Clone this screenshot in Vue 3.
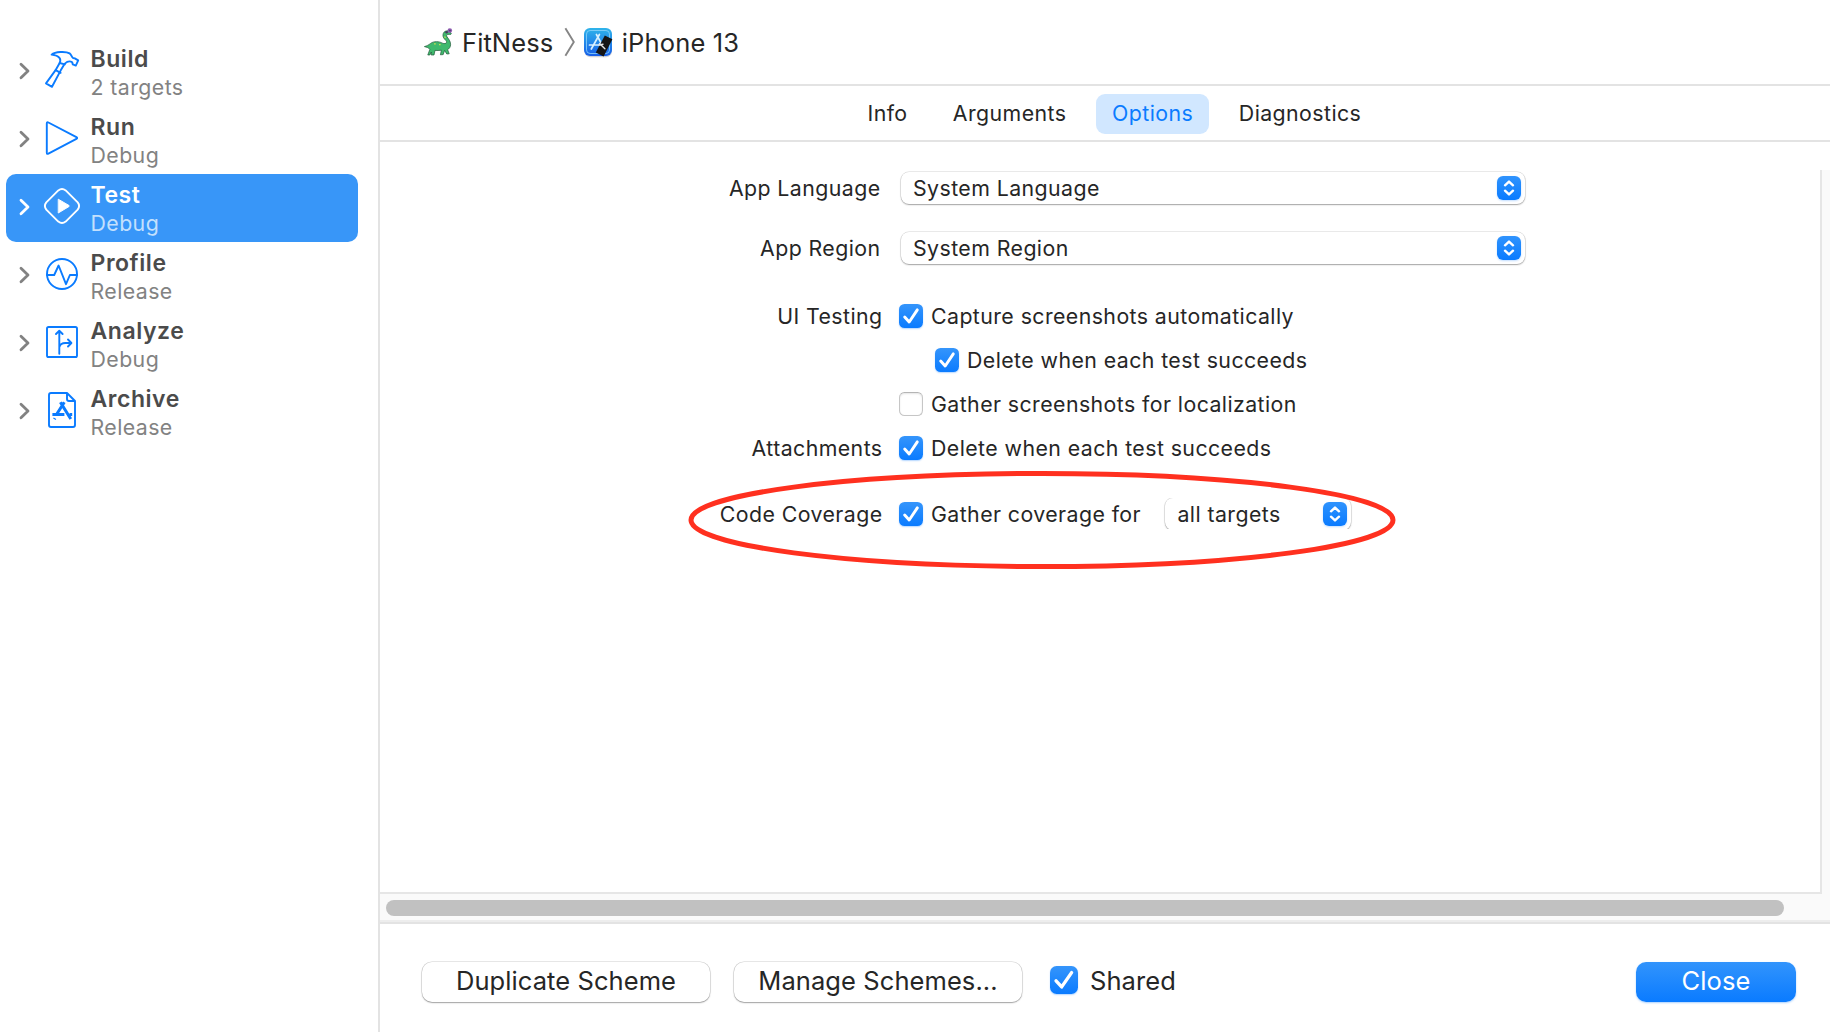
<script setup>
import { ref } from 'vue'

const schemes = [
  { name: 'Build', detail: '2 targets' },
  { name: 'Run', detail: 'Debug' },
  { name: 'Test', detail: 'Debug' },
  { name: 'Profile', detail: 'Release' },
  { name: 'Analyze', detail: 'Debug' },
  { name: 'Archive', detail: 'Release' }
]
const tabs = ['Info', 'Arguments', 'Options', 'Diagnostics']
const selects = [
  { label: 'App Language', value: 'System Language' },
  { label: 'App Region', value: 'System Region' }
]
const checks = ref([
  { label: 'UI Testing', text: 'Capture screenshots automatically', on: true },
  { label: '', text: 'Delete when each test succeeds', on: true, nested: true },
  { label: '', text: 'Gather screenshots for localization', on: false },
  { label: 'Attachments', text: 'Delete when each test succeeds', on: true },
  { label: 'Code Coverage', text: 'Gather coverage for', on: true, target: 'all targets' }
])
const activeScheme = ref('Test')
const activeTab = ref('Options')
const shared = ref(true)
</script>

<template>
  <div class="window">
    <aside class="sidebar">
      <div
        v-for="s in schemes"
        :key="s.name"
        class="scheme"
        :class="{ active: s.name === activeScheme }"
        @click="activeScheme = s.name"
      >
        <svg class="disclosure" width="12" height="18" viewBox="0 0 12 18"><path d="M2 2.2 9 9 2 15.8" /></svg>
        <svg class="glyph" width="40" height="40" viewBox="0 0 40 40">
          <template v-if="s.name === 'Build'">
            <path d="M9.6 4.6C13 1.6 24 1.2 27.6 3.4c2 1.3 1.8 3.8 3.4 4.6l1.8.4 3.4 2-2.4 5.2-3-1.2-.6-2.2c-2.6-1.6-5.2-.6-7.4 1.4L18.6 20.6 10 36.8 4 33.4 13.4 20.4l4.4-7.6c1.4-3.4.4-7-8.2-8.2Z" />
            <path d="M13.6 20.2l5 2.6M17.6 13l5.2 1.4" />
          </template>
          <path v-else-if="s.name === 'Run'" d="M6.4 4.5 34.4 19.2Q36 20 34.4 20.8L6.4 35.7Q4.8 36.4 4.8 34.8V5.4Q4.8 3.8 6.4 4.5Z" />
          <template v-else-if="s.name === 'Test'">
            <path d="M16.3 4.4q3.7-2.8 7.4 0l12 12q2.8 3.6 0 7.2l-12 12q-3.7 2.8-7.4 0l-12-12q-2.8-3.6 0-7.2Z" />
            <path class="solid" d="M16.6 13.4 27 19.5q.9.5 0 1L16.6 26.8Z" />
          </template>
          <template v-else-if="s.name === 'Profile'">
            <circle cx="20" cy="20" r="15" />
            <path d="M5 21h7.2l4.4-9.5L24 30.2 27.9 21H35" />
          </template>
          <template v-else-if="s.name === 'Analyze'">
            <rect x="5" y="5" width="30" height="30" rx="1.6" />
            <path d="M17.3 31.7V9M14 12l3.3-3.2 3.3 3.2M17.4 25c.8-3 3.2-4 6-4h5.4M26 17.5l3.4 3.5-3.4 3.5" />
          </template>
          <template v-else>
            <path d="M25 3H9Q7 3 7 5v30q0 2 2 2h22q2 0 2-2V11L25 3v6q0 2 2 2h6" />
            <path class="bold" d="M22.3 12.2 14.8 24M18.4 12.2 28.8 29M10.4 24.4h12M27.6 24.4h2.6M13 28.2l-.6 1" />
          </template>
        </svg>
        <div class="names">
          <strong>{{ s.name }}</strong>
          <span>{{ s.detail }}</span>
        </div>
      </div>
    </aside>

    <main class="main">
      <header class="path">
        <svg class="dino" width="29" height="28" viewBox="0 0 29 28">
          <path d="M.4 18.6C3 17.8 4.6 17 6.6 15.4c3-2.4 8.6-2.2 12-.2 2.6 1.2 5-.4 3.6-2.4C19.4 10.2 18.200 8 19.4 5.2 20.4 3 22.8 2.4 25.2 3.2l2 2c.4 1-.6 1.4-1.8 1.2-2.6-.2-3.4.6-2.4 2.4 1.4 2 3.8 4.4 3.6 8-.2 2.4-1.4 4-3 4.8l1.6 4.2-2.4.2-2.2-3.6-1.4 4.2-2.8.2 1-4.6c-2.2.4-4.6.4-6.4.2l-1 4.6H7.2l.2-3-1.6 3H3.8l2-5.6C4.4 19.2 2.6 19.4.4 18.6Z" fill="#3fb96d" stroke="#21593a" stroke-width=".7" />
          <path d="M10 15.8h1.8M15 16.6h1.6M20.6 8.4l.8 1.6" stroke="#c6dc54" stroke-width="1.2" />
          <circle cx="25.8" cy="2.6" r="2.3" fill="#8d5bb0" /><circle cx="22.6" cy="4.2" r="1.2" fill="#4a3560" /><circle cx="26" cy="2.6" r=".8" fill="#4a3560" />
        </svg>
        <span class="project">FitNess</span>
        <svg class="crumb" width="12" height="30" viewBox="0 0 12 30"><path d="M1.4 1.2 9.8 15 1.4 28.8" /></svg>
        <svg class="simulator" width="30" height="30" viewBox="0 0 30 30">
          <defs><linearGradient id="sim" x1="0" y1="0" x2="0" y2="1"><stop offset="0" stop-color="#2fb4ea" /><stop offset="1" stop-color="#175fe8" /></linearGradient></defs>
          <rect x=".4" y="1.2" width="27.6" height="28" rx="6" fill="#9a9ea6" opacity=".45" />
          <rect width="28" height="28" rx="6" fill="url(#sim)" />
          <rect x="2.5" y="2.5" width="23" height="23" rx="3.6" fill="none" stroke="#8ed4fa" stroke-width=".8" />
          <path d="M12.4 6.5 20.5 21M15.4 6.5 7.3 21M5.5 17h14" fill="none" stroke="#d7f0ff" stroke-width="1.700" stroke-linecap="round" />
          <path d="M20.8 7.6 28.4 11.3 19.6 28.6 11.8 24.6Z" fill="#151515" />
          <path d="m15.500 15.600 5.400 5.200M15 17l4-.8" stroke="#e5e5e5" stroke-width="1.400" stroke-linecap="round" />
        </svg>
        <span class="device">iPhone 13</span>
      </header>

      <nav class="tabs">
        <button v-for="t in tabs" :key="t" class="tab" :class="{ active: t === activeTab }" @click="activeTab = t">{{ t }}</button>
      </nav>

      <section class="pane">
        <div class="form">
          <div v-for="s in selects" :key="s.label" class="row select-row">
            <label class="label">{{ s.label }}</label>
            <div class="select">
              <span>{{ s.value }}</span>
              <span class="stepper"><svg width="24" height="24" viewBox="0 0 24 24"><path d="M8 9.3 12 5.6l4 3.7M8 14.7l4 3.7 4-3.7" /></svg></span>
            </div>
          </div>
          <div v-for="(c, i) in checks" :key="i" class="row check-row" :class="{ nested: c.nested, coverage: c.target, first: i === 0 }">
            <label class="label">{{ c.label }}</label>
            <span class="checkbox" :class="{ on: c.on }" @click="c.on = !c.on">
              <svg v-if="c.on" viewBox="0 0 24 24"><path d="M5.7 13 10.2 18 18.3 5.9" /></svg>
            </span>
            <span class="text">{{ c.text }}</span>
            <div v-if="c.target" class="select small">
              <span>{{ c.target }}</span>
              <span class="stepper"><svg width="24" height="24" viewBox="0 0 24 24"><path d="M8 9.3 12 5.6l4 3.7M8 14.7l4 3.7 4-3.7" /></svg></span>
            </div>
            <svg v-if="c.target" class="ring" width="708" height="100" viewBox="0 0 708 100"><ellipse cx="354" cy="50" rx="351" ry="46.5" /></svg>
          </div>
        </div>
        <div class="v-track"></div>
      </section>
      <div class="h-track"><div class="thumb"></div></div>

      <footer class="footer">
        <button class="button">Duplicate Scheme</button>
        <button class="button">Manage Schemes...</button>
        <span class="checkbox large" :class="{ on: shared }" @click="shared = !shared">
          <svg v-if="shared" viewBox="0 0 24 24"><path d="M5.2 12.7 10 17.9 18.5 5.7" /></svg>
        </span>
        <span class="shared">Shared</span>
        <button class="button primary">Close</button>
      </footer>
    </main>
  </div>
</template>

<style>
body { background: #fff; }
</style>

<style scoped>
.window {
  display: flex;
  width: 1830px;
  height: 1032px;
  overflow: hidden;
  background: #fff;
  color: #262626;
  font-family: Inter, "Liberation Sans", sans-serif;
  font-size: 21.3px;
  letter-spacing: 0.43px;
  white-space: nowrap;
}
button { font: inherit; letter-spacing: inherit; color: inherit; border: 0; background: none; padding: 0; }
svg { display: block; flex: none; fill: none; }

.sidebar {
  box-sizing: border-box;
  flex: none;
  width: 380px;
  padding: 38px 20px 0 6px;
  border-right: 2px solid #e3e3e3;
}
.scheme {
  display: flex;
  height: 68px;
  border-radius: 10px;
}
.disclosure { margin: 24px 0 0 12.5px; stroke: #828282; stroke-width: 2.8; stroke-linecap: round; stroke-linejoin: round; }
.glyph { margin: 12px 0 0 11.5px; stroke: #0a7bff; stroke-width: 1.9; stroke-linejoin: round; stroke-linecap: round; }
.glyph .solid { fill: #fff; stroke: #fff; stroke-width: 1; }
.glyph .bold { stroke-width: 3; stroke-linecap: butt; }
.names { padding: 7px 0 0 8.5px; line-height: 28px; }
.names strong, .names span { display: block; }
.names strong { font-size: 23px; font-weight: 600; letter-spacing: 0.55px; color: #4b4b4b; }
.names span { color: #828282; letter-spacing: 0.43px; }
.scheme.active { background: #3896f8; }
.active .disclosure, .active .glyph { stroke: #fff; }
.active .names strong { color: #fff; }
.active .names span { color: #c3e0fd; }

.main { flex: none; width: 1450px; display: flex; flex-direction: column; }
.path {
  display: flex;
  align-items: center;
  height: 84px;
  padding-left: 44px;
  border-bottom: 2px solid #e3e3e3;
  font-size: 25.5px;
  letter-spacing: 0.1px;
}
.project { margin-left: 9px; }
.crumb { margin-left: 10.5px; stroke: #858585; stroke-width: 1.9; }
.simulator { margin: 2px 0 0 8px; }
.device { margin-left: 8px; letter-spacing: 0.15px; }

.tabs {
  display: flex;
  align-items: center;
  gap: 14.3px;
  height: 52px;
  padding: 2px 0 0 472px;
  border-bottom: 2px solid #e3e3e3;
}
.tab { height: 40px; padding: 0 15.5px 2px; border-radius: 9px; line-height: 38px; }
.tab.active { padding: 0 15.9px 2px; background: #d1e7ff; color: #0a7bff; }

.pane { display: flex; height: 752px; }
.form {
  box-sizing: border-box;
  width: 1440px;
  padding-top: 16px;
  border-bottom: 2px solid #e6e6e6;
}
.v-track { width: 8px; margin-top: 28px; border-left: 2px solid #e6e6e6; background: #fafafa; }
.row { position: relative; display: flex; align-items: center; line-height: 28px; }
.select-row { height: 60px; }
.check-row { height: 44px; }
.check-row.first { margin-top: 16px; }
.check-row.coverage { margin-top: 22px; }
.label { flex: none; width: 500.5px; text-align: right; }
.check-row .label { width: 502.5px; }

.select {
  display: flex;
  align-items: center;
  justify-content: space-between;
  box-sizing: border-box;
  width: 624px;
  height: 32px;
  margin-left: 20.5px;
  padding: 0 4px 0 12px;
  border-radius: 8px;
  background: #fff;
  box-shadow: 0 0 0 0.5px rgba(0, 0, 0, 0.16), 0 1px 1.5px rgba(0, 0, 0, 0.3);
}
.select.small { width: 186px; margin-left: 24.5px; clip-path: inset(0 -4px 1px -4px); }
.stepper {
  width: 24px;
  height: 24px;
  border-radius: 6px;
  background: linear-gradient(#2f93fd, #0a7bff);
  box-shadow: 0 1px 2px rgba(10, 123, 255, 0.25);
}
.stepper svg { stroke: #fff; stroke-width: 2.4; stroke-linecap: round; stroke-linejoin: round; }

.checkbox {
  box-sizing: border-box;
  flex: none;
  width: 24px;
  height: 24px;
  margin-left: 16.5px;
  border: 1px solid #c6c6c6;
  border-top-color: #b5b5b5;
  border-radius: 5.5px;
  box-shadow: inset 0 1px 2px rgba(0, 0, 0, 0.1);
}
.checkbox.on {
  border: 0;
  background: linear-gradient(#3595fb, #0a7bff);
  box-shadow: 0 1px 1.5px rgba(10, 123, 255, 0.3);
}
.checkbox svg { width: 100%; height: 100%; stroke: #fff; stroke-width: 2.9; stroke-linecap: round; stroke-linejoin: round; }
.nested .checkbox { margin-left: 52.5px; }
.text { margin-left: 8px; }
.ring { position: absolute; left: 308px; top: -22px; stroke: #ff301f; stroke-width: 5; pointer-events: none; }

.h-track { display: flex; height: 26px; border-bottom: 2px solid #ededed; background: #fafafa; }
.thumb { width: 1398px; height: 16px; margin: 6px 0 0 6px; border-radius: 8px; background: #c1c1c1; }

.footer {
  display: flex;
  align-items: center;
  height: 80px;
  padding: 18px 34px 8px 42px;
  border-top: 2px solid #e3e3e3;
  font-size: 25.5px;
  letter-spacing: 0.08px;
}
.button {
  box-sizing: border-box;
  width: 288px;
  height: 40px;
  margin-right: 24px;
  padding-bottom: 2px;
  border-radius: 10px;
  line-height: 38px;
  background: #fff;
  box-shadow: 0 0 0 0.5px rgba(0, 0, 0, 0.18), 0 1px 1.5px rgba(0, 0, 0, 0.3);
}
.checkbox.large { width: 28px; height: 28px; margin-left: 4px; margin-top: -4px; border-radius: 6.5px; }
.shared { margin: -4px 0 0 12px; }
.button.primary {
  width: 160px;
  margin: 0 0 0 auto;
  color: #fff;
  background: linear-gradient(#3294fc, #0a7bff);
  box-shadow: 0 1px 2px rgba(10, 123, 255, 0.35);
}
</style>
